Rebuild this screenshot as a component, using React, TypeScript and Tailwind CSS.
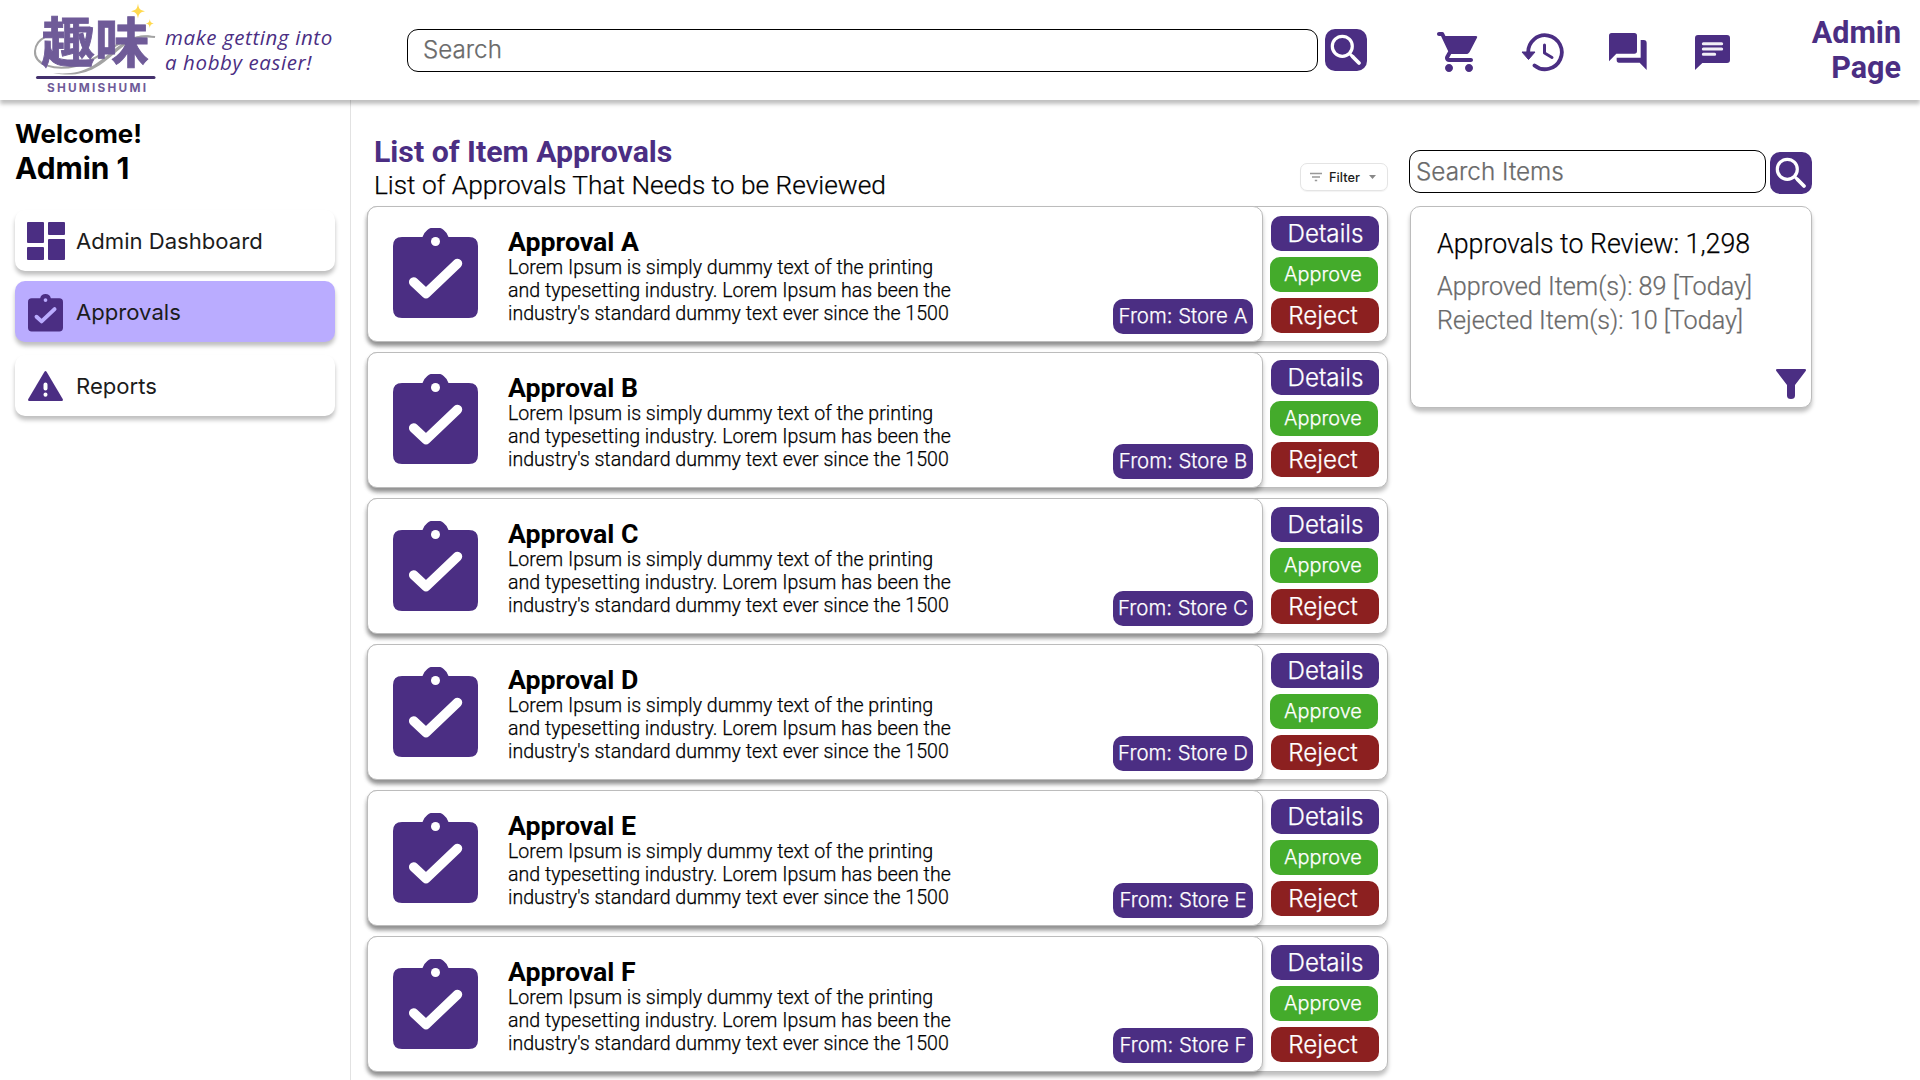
import React from 'react';
import clsx from 'clsx';

const SHADOW = 'shadow-[0_4px_4px_rgba(0,0,0,0.25)]';
const THIN = 'font-light [-webkit-text-stroke-width:0.25px]';

function Logo() {
  return (
    <svg className="h-[100px] w-[160px] shrink-0" viewBox="0 0 160 100">
      <path d="M64 36C51 32 36 38 35 51c-1 14 20 20 41 15 29-7 42-33 79-29" fill="none" stroke="#a3a3a3" strokeWidth="2" />
      <path d="M53 73c31 3 43-9 57-20 14-12 28-22 46-16-18-3-29 6-42 17-15 13-30 25-61 19z" fill="#a3a3a3" />
      <text x="41" y="62.500" fontSize="54" fontWeight="700" fill="#6f5b98" stroke="#6f5b98" strokeWidth="0.900" fontFamily="'Noto Sans CJK JP', sans-serif" textLength="108">
        趣味
      </text>
      <rect x="36" y="76" width="119.500" height="3" rx="1.5" fill="#43306d" />
      <text x="47" y="91.500" fontSize="11.800" fontWeight="700" fill="#6f5b98" fontFamily="Inter, sans-serif" textLength="99">
        SHUMISHUMI
      </text>
      <path d="M138 3.500c.7 5 2 6.800 7 7.700-5 .9-6.300 2.600-7 7.300-.7-4.700-2-6.400-7-7.300 5-.9 6.300-2.700 7-7.700zM149.800 19c.4 3 1.200 4 4 4.500-2.800.5-3.600 1.500-4 4.500-.4-3-1.200-4-4-4.500 2.800-.5 3.600-1.500 4-4.500z" fill="#ffd94f" />
    </svg>
  );
}

function SearchButton() {
  return (
    <button className="h-[42px] w-[42px] shrink-0 rounded-[10px] bg-[#4b2e83]">
      <svg viewBox="0 0 42 42" fill="none" stroke="#fff">
        <circle cx="17.300" cy="17.300" r="10" strokeWidth="3.200" />
        <path d="M25 25l2.500 2.500" strokeWidth="3" />
        <path d="M27.500 27.500l6.500 6.500" strokeWidth="3.800" strokeLinecap="round" />
      </svg>
    </button>
  );
}

function CartIcon() {
  return (
    <svg className="h-12 w-12" viewBox="0 0 24 24" fill="#4b2e83">
      <path d="M7 18c-1.100 0-1.990.9-1.990 2S5.900 22 7 22s2-.9 2-2-.9-2-2-2zM1 3c0 .55.45 1 1 1h1l3.600 7.590-1.350 2.440C4.520 15.370 5.480 17 7 17h11c.55 0 1-.45 1-1s-.45-1-1-1H7l1.100-2h7.450c.75 0 1.410-.41 1.750-1.030L21 4.900c.3-.5 0-.9-.5-.9H5.210l-.67-1.430a.993.993 0 00-.9-.57H2c-.55 0-1 .45-1 1zm16 15c-1.100 0-1.990.9-1.990 2s.89 2 1.990 2 2-.9 2-2-.9-2-2-2z" />
    </svg>
  );
}

function HistoryIcon() {
  return (
    <svg className="h-10 w-11" viewBox="0 0 44 40" fill="none" stroke="#4b2e83">
      <path d="M7.200 21A16.800 17 0 1 1 13.500 33.500" strokeWidth="3.800" strokeLinecap="round" />
      <path d="M1 20h13l-6.500 7.500z" fill="#4b2e83" strokeWidth="1" strokeLinejoin="round" />
      <path d="M23.500 13v8l7.500 4.500" strokeWidth="3" strokeLinecap="round" strokeLinejoin="round" />
    </svg>
  );
}

function ForumIcon() {
  return (
    <svg className="h-[38px] w-[38px]" viewBox="0 0 114 114" fill="#4b2e83">
      <path d="M8 0h68q8 0 8 8v46q0 8-8 8H22L0 85V8Q0 0 8 0z" />
      <path d="M95 21h9q9 0 9 9v81L92 89H30q-7 0-7-8v-7h72z" />
    </svg>
  );
}

function ChatIcon() {
  return (
    <svg className="h-9 w-9" viewBox="0 0 108 108">
      <path d="M9 0h87q9 0 9 9v66q0 9-9 9H22L0 105V9Q0 0 9 0z" fill="#4b2e83" />
      <path d="M25 26h55M25 42h55M25 58h34" stroke="#f1eef6" strokeWidth="9" strokeLinecap="round" />
    </svg>
  );
}

function ClipboardIcon({ className, check }: { className: string; check: string }) {
  return (
    <svg className={className} viewBox="0 0 85 90">
      <path d="M9 9h20.500a13.500 13.500 0 0 1 26 0H76q9 0 9 9v63q0 9-9 9H9q-9 0-9-9V18q0-9 9-9z" fill="#4b2e83" />
      <circle cx="42.500" cy="13.500" r="4.500" fill={check} />
      <path d="M20.700 54L33 65.500 64.500 35.500" fill="none" stroke={check} strokeWidth="9.500" strokeLinecap="round" strokeLinejoin="round" />
    </svg>
  );
}

function Header() {
  return (
    <header className={clsx('relative z-10 flex h-[100px] items-center bg-white', SHADOW)}>
      <Logo />
      <p className="ml-[5px] w-[242px] font-['Open_Sans'] text-[20.500px] leading-[25px] font-medium tracking-[0.600px] text-[#4b2e83] italic">
        make getting into
        <br />a hobby easier!
      </p>
      <div className={clsx('flex h-[43px] w-[911px] items-center rounded-[11px] border border-black pt-px pl-[15px] text-[24.200px] text-[#6a6a6a]', THIN)}>Search</div>
      <div className="ml-[7px] flex">
        <SearchButton />
      </div>
      <div className="ml-[68px] flex h-12 w-12 items-center pt-1"><CartIcon /></div>
      <div className="ml-[38px] pt-1"><HistoryIcon /></div>
      <div className="ml-[44px] pt-1"><ForumIcon /></div>
      <div className="ml-[48px] pt-1.5"><ChatIcon /></div>
      <div className="mr-[19px] mb-px ml-auto text-right font-[Roboto] text-[30.500px] leading-[35px] font-bold text-[#4b2e83]">
        Admin
        <br />
        Page
      </div>
    </header>
  );
}

function NavItem({ icon, label, active }: { icon: React.ReactNode; label: string; active?: boolean }) {
  return (
    <a className={clsx('flex h-[61px] w-80 items-center rounded-[10px] pl-3', SHADOW, active ? 'bg-[#baacff]' : 'bg-white')}>
      <span className="flex w-[49px]">{icon}</span>
      <span className="pt-0.5 text-[22.100px] text-[#1c1c1c]">{label}</span>
    </a>
  );
}

function Sidebar() {
  return (
    <aside className="w-[351px] shrink-0 border-r border-[#e2e2e2] pl-[15px]">
      <h2 className="pt-[17px] text-[25.900px] leading-[34px] font-bold">Welcome!</h2>
      <h1 className="text-[29.900px] leading-[35px] font-bold">Admin 1</h1>
      <nav className="mt-6">
        <NavItem
          label="Admin Dashboard"
          icon={
            <svg className="h-[38px] w-[38px]" viewBox="0 0 38 38" fill="#4b2e83">
              <rect width="17" height="21" rx="1" />
              <rect x="21" width="17" height="13" rx="1" />
              <rect y="25" width="17" height="13" rx="1" />
              <rect x="21" y="17" width="17" height="21" rx="1" />
            </svg>
          }
        />
        <div className="h-2.5" />
        <NavItem active label="Approvals" icon={<ClipboardIcon className="mt-[3px] ml-px h-10 w-[35px]" check="#baacff" />} />
        <div className="h-[13px]" />
        <NavItem
          label="Reports"
          icon={
            <svg className="ml-px h-[30px] w-[35px]" viewBox="0 0 35 30">
              <path d="M16.300 1q1.200-2 2.400 0L34.700 28q.9 2-1.200 2h-32q-2.100 0-1.200-2z" fill="#4b2e83" />
              <path d="M17.500 13.500v4M17.500 23.500v.2" stroke="#fff" strokeWidth="4" strokeLinecap="round" />
            </svg>
          }
        />
      </nav>
    </aside>
  );
}

const APPROVALS = [
  { id: 'A', top: 'pt-[9px]', badge: 'mb-[7px]', icon: 'mt-[21px]' },
  { id: 'B', top: 'pt-[7px]', badge: 'mb-[8px]', icon: 'mt-[21px]' },
  { id: 'C', top: 'pt-[8px]', badge: 'mb-[7px]', icon: 'mt-[22px]' },
  { id: 'D', top: 'pt-[8px]', badge: 'mb-[8px]', icon: 'mt-[22px]' },
  { id: 'E', top: 'pt-[8px]', badge: 'mb-[7px]', icon: 'mt-[22px]' },
  { id: 'F', top: 'pt-[8px]', badge: 'mb-[8px]', icon: 'mt-[22px]' },
];

function ApprovalCard({ id, top, badge, icon }: { id: string; top: string; badge: string; icon: string }) {
  return (
    <article className={clsx('flex h-[136px] rounded-[10px] border border-[#bcbcbc] bg-white', SHADOW)}>
      <div className={clsx('-my-px -ml-px flex w-[896px] rounded-[10px] border border-[#bcbcbc] bg-white', SHADOW)}>
        <ClipboardIcon className={clsx('ml-[25px] h-[90px] w-[85px]', icon)} check="#fff" />
        <div className="ml-[30px] font-[Roboto]">
          <h3 className="mt-[21px] text-[26.700px] leading-[28px] font-bold">Approval {id}</h3>
          <p className={clsx('text-[19.570px] leading-[23px]', THIN)}>
            Lorem Ipsum is simply dummy text of the printing
            <br />
            and typesetting industry. Lorem Ipsum has been the
            <br />
            industry's standard dummy text ever since the 1500
          </p>
        </div>
        <span className={clsx('mr-[9px] ml-auto flex h-[35px] w-[140px] items-center justify-center self-end rounded-[10px] bg-[#4b2e83] text-[20.400px] whitespace-nowrap text-white', THIN, badge)}>
          From: Store {id}
        </span>
      </div>
      <div className={clsx('flex flex-col gap-1.5 pl-[7px] text-white', THIN, top)}>
        <button className="ml-px h-[35px] w-[108px] rounded-[10px] bg-[#4b2e83] pl-px text-[24.200px] leading-[34px]">Details</button>
        <button className="h-[35px] w-[108px] rounded-[10px] bg-[#44ab2b] pb-px pr-0.5 text-[19.900px] leading-[33px]">Approve</button>
        <button className="ml-px h-[35px] w-[108px] rounded-[10px] bg-[#8c2020] pr-1 text-[24.200px] leading-[34px]">Reject</button>
      </div>
    </article>
  );
}

function ApprovalList() {
  return (
    <section className="ml-[16px] w-[1021px] shrink-0">
      <div className="flex h-[106px] pt-[35px]">
        <div className="pl-[7px] font-[Roboto]">
          <h2 className="text-[30.250px] leading-[33px] font-bold text-[#4b2e83]">List of Item Approvals</h2>
          <p className={clsx('mt-px text-[26.300px] leading-[33px]', THIN)}>List of Approvals That Needs to be Reviewed</p>
        </div>
        <button className="mt-7 ml-auto flex h-7 w-[88px] items-center rounded-[7px] border border-[#e4e4e4] pl-[9px] text-[12.800px] font-medium text-[#1c1c1c] shadow-[0_1px_1px_rgba(0,0,0,0.05)]">
          <svg className="h-2.5 w-3" viewBox="0 0 12 10" stroke="#999" strokeWidth="1.300">
            <path d="M0 1.500h12M2 5h8M4.800 8.500h2.400" />
          </svg>
          <span className="ml-[7px] pt-px">Filter</span>
          <svg className="ml-[9px] h-1 w-[7px]" viewBox="0 0 7 4">
            <path d="M0 0h7L3.500 4z" fill="#888" />
          </svg>
        </button>
      </div>
      <div className="flex flex-col gap-2.5">
        {APPROVALS.map((item) => (
          <ApprovalCard key={item.id} {...item} />
        ))}
      </div>
    </section>
  );
}

function Summary() {
  return (
    <section className="ml-[21px] w-[403px] shrink-0 pt-[50px]">
      <div className="flex justify-between">
        <div className={clsx('flex h-[43px] w-[357px] items-center rounded-[11px] border border-black pl-[6px] text-[24.300px] text-[#6a6a6a]', THIN)}>Search Items</div>
        <div className="flex pt-0.5">
          <SearchButton />
        </div>
      </div>
      <div className={clsx('mt-3 ml-px flex h-[202px] flex-col rounded-[10px] border border-[#bcbcbc] bg-white pt-5 pl-[26px] font-[Roboto]', SHADOW, THIN)}>
        <p className="text-[26.750px] leading-[34px]">Approvals to Review: 1,298</p>
        <p className="mt-[9px] text-[25.200px] leading-[34px] text-[#6a6a6a]">
          Approved Item(s): 89 [Today]
          <br />
          Rejected Item(s): 10 [Today]
        </p>
        <svg className="mt-auto mr-[5px] mb-2 h-[30px] w-[30px] self-end" viewBox="0 0 30 30" fill="#4b2e83">
          <path d="M1.500 0h27q2.500 0 1 2.200L19 16v10.500q0 3.500-4 3.500t-4-3.500V16L.5 2.200Q-1 0 1.500 0z" />
        </svg>
      </div>
    </section>
  );
}

export default function App() {
  return (
    <div className="h-[1080px] w-[1920px] overflow-hidden bg-white font-[Inter] text-black">
      <Header />
      <main className="flex h-[980px]">
        <Sidebar />
        <ApprovalList />
        <Summary />
      </main>
    </div>
  );
}
